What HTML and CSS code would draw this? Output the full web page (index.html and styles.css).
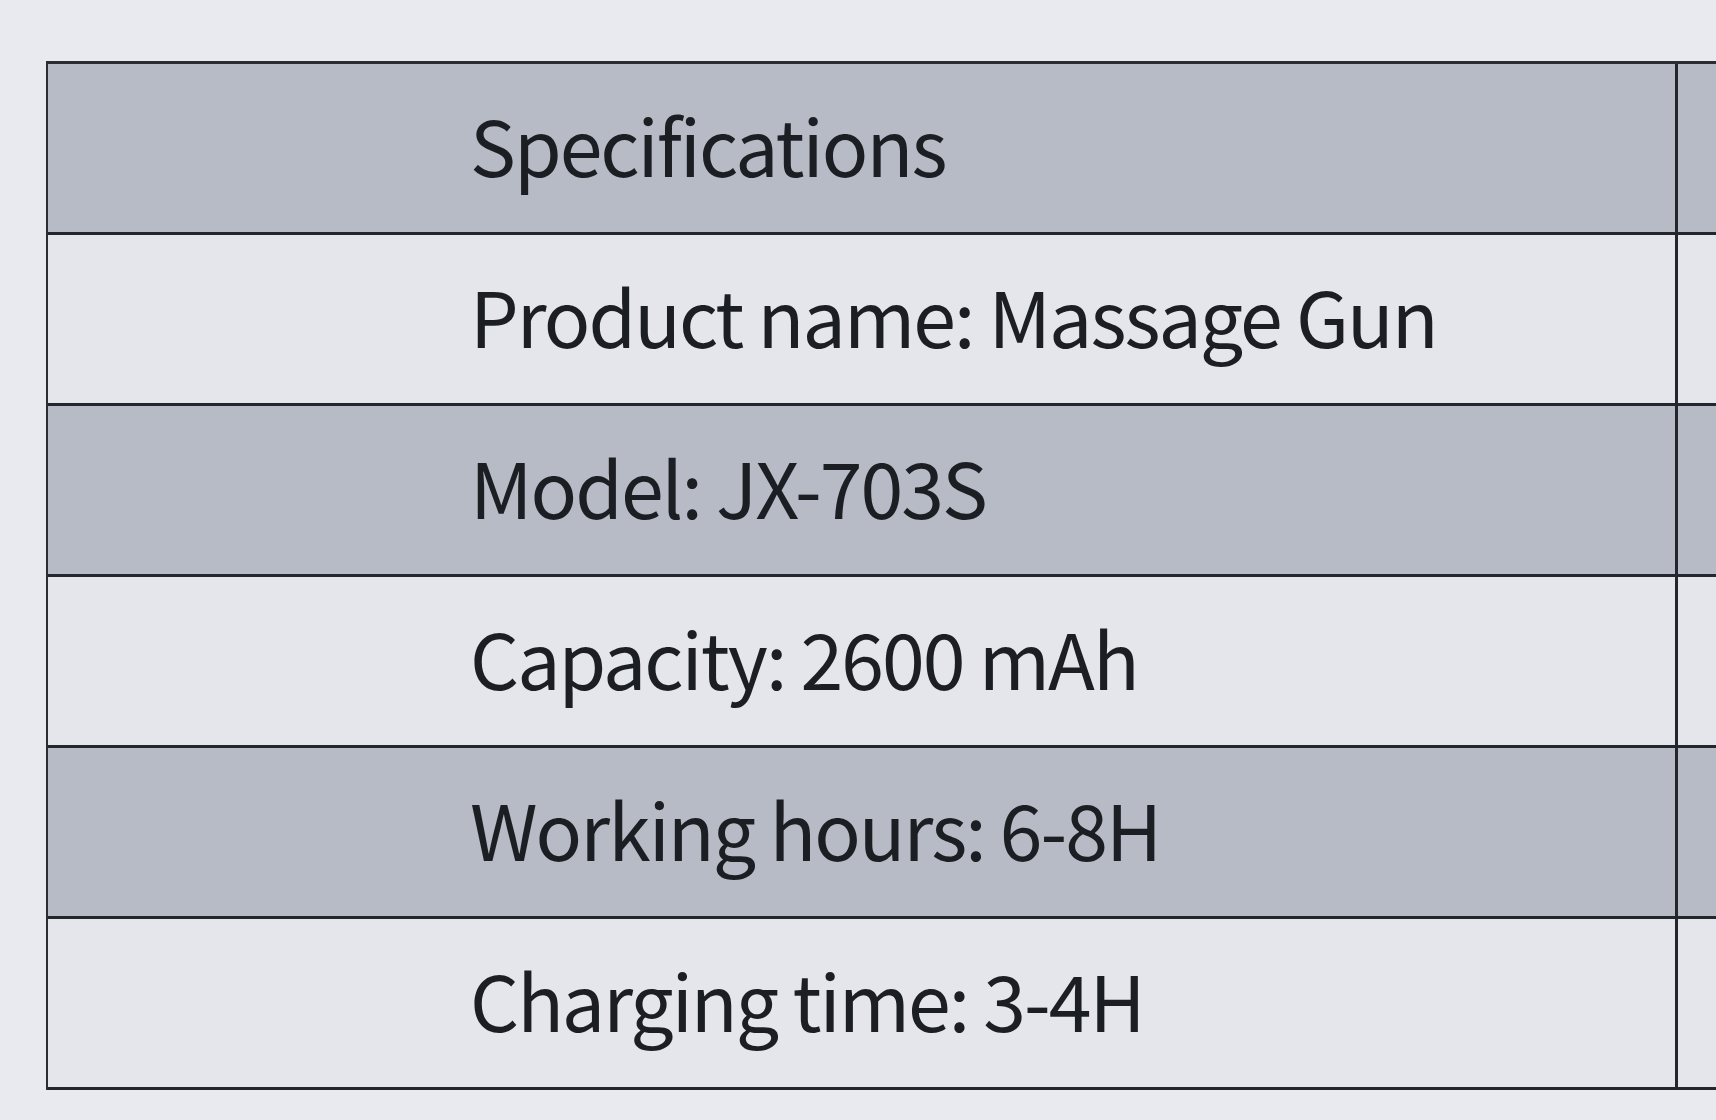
FILE: index.html
```html
<!DOCTYPE html>
<html>
<head>
<meta charset="utf-8">
<link rel="stylesheet" href="styles.css">
</head>
<body>
<div class="sheet">
  <div class="spec-table">
    <div class="row shaded"><div class="cell main">Specifications</div><div class="cell side"></div></div>
    <div class="row"><div class="cell main">Product name: Massage Gun</div><div class="cell side"></div></div>
    <div class="row shaded"><div class="cell main">Model: JX-703S</div><div class="cell side"></div></div>
    <div class="row"><div class="cell main">Capacity: 2600 mAh</div><div class="cell side"></div></div>
    <div class="row shaded"><div class="cell main">Working hours: 6-8H</div><div class="cell side"></div></div>
    <div class="row"><div class="cell main">Charging time: 3-4H</div><div class="cell side"></div></div>
  </div>
</div>
</body>
</html>
```
FILE: styles.css
```css
html, body {
  margin: 0;
  padding: 0;
  width: 1716px;
  height: 1120px;
  overflow: hidden;
  background: #e9eaef;
}
.sheet {
  padding: 61px 0 0 46px;
}
.spec-table {
  width: 1670px;
  border-top: 3px solid #2a2d33;
  border-left: 2px solid #2a2d33;
}
.row {
  display: grid;
  grid-template-columns: 1630px 1fr;
  height: 168px;
  border-bottom: 3px solid #23262c;
  background: #e5e6eb;
}
.row.shaded {
  background: #b7bbc5;
}
.cell {
  display: flex;
  align-items: center;
}
.main {
  padding-left: 422px;
  padding-bottom: 10px;
  border-right: 3px solid #23262c;
  font-family: "Noto Sans CJK SC", "Noto Sans", sans-serif;
  font-size: 77px;
  font-weight: 400;
  color: #1b1e23;
  letter-spacing: -2px;
  white-space: nowrap;
}
```
